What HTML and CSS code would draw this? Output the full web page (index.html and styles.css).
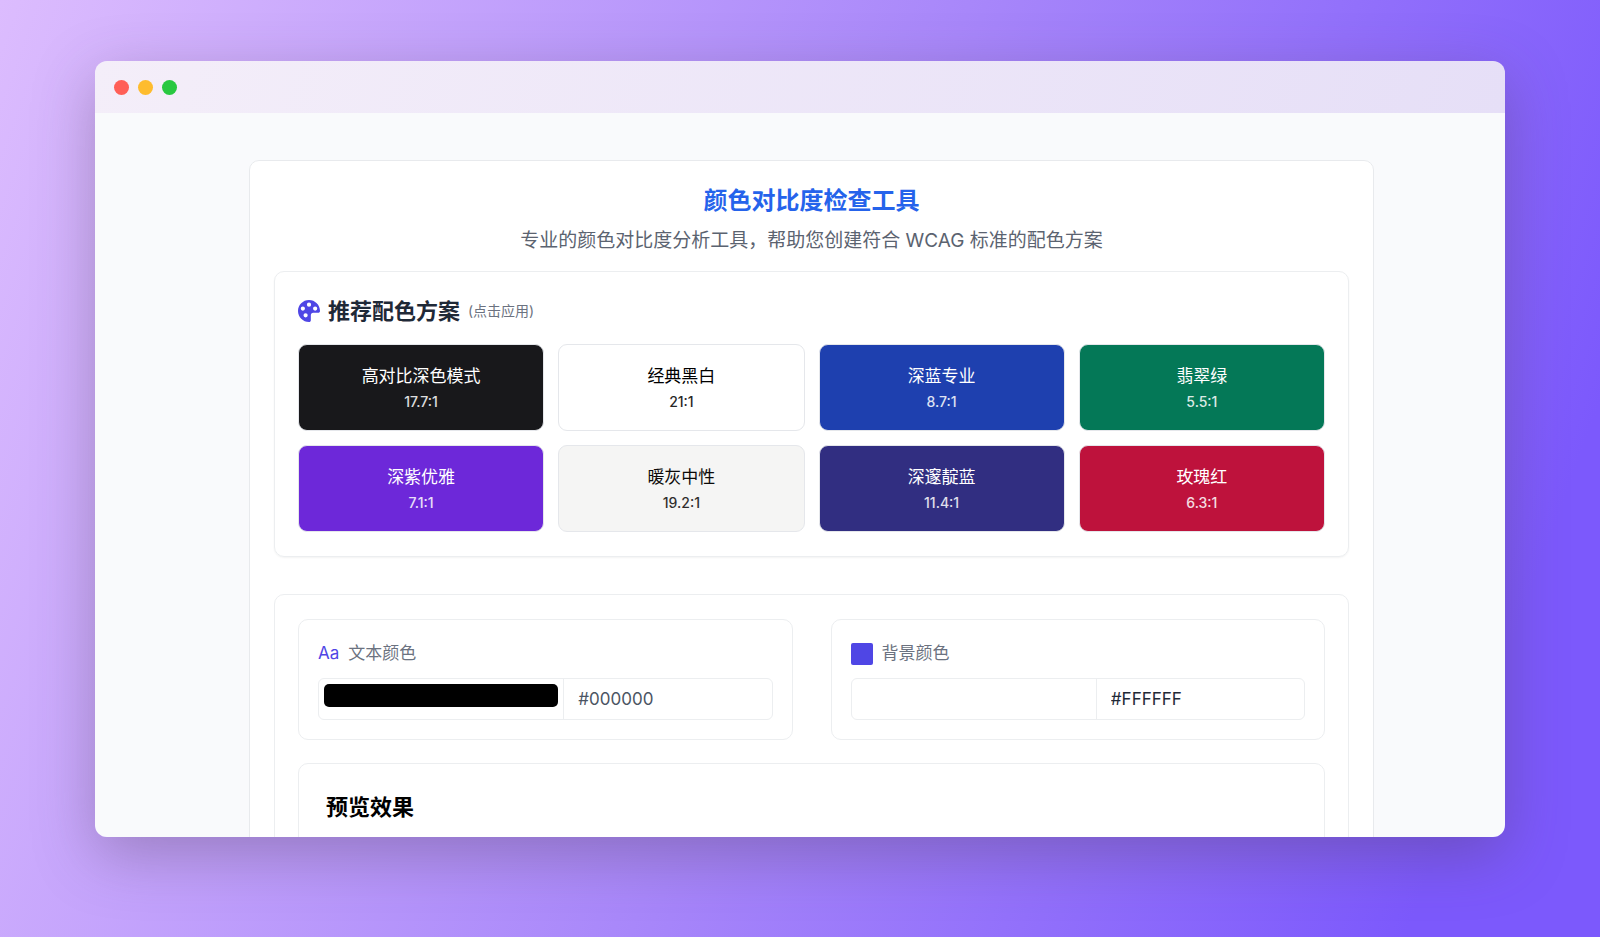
FILE: index.html
```html
<!DOCTYPE html>
<html lang="zh-CN">
<head>
    <meta charset="UTF-8">
    <meta name="viewport" content="width=device-width, initial-scale=1.0">
    <title>颜色对比度检查工具</title>
    <link rel="stylesheet" href="styles.css">
</head>
<body>
    <div class="window">
        <div class="titlebar">
            <span class="dot dot-red"></span>
            <span class="dot dot-yellow"></span>
            <span class="dot dot-green"></span>
        </div>

        <div class="viewport">
            <main class="container">
                <header class="header">
                    <h1>颜色对比度检查工具</h1>
                    <p>专业的颜色对比度分析工具，帮助您创建符合 WCAG 标准的配色方案</p>
                </header>

                <section class="panel schemes">
                    <h2>
                        <svg class="icon" viewBox="0 0 24 24" aria-hidden="true">
                            <path fill-rule="evenodd" d="M12 0C5.400 0 0 5.400 0 12s5.400 12 12 12c1.200 0 2-.8 2-2v-5.500c0-1.400 1-2.500 2.500-2.500H22c1.200 0 2-.8 2-2C24 5.400 18.600 0 12 0zM5.300 7.100a2.300 2.300 0 1 1 0 4.600 2.300 2.300 0 0 1 0-4.600zM12 2.800a2.300 2.300 0 1 1 0 4.600 2.300 2.300 0 0 1 0-4.600zM18.700 7.100a2.300 2.300 0 1 1 0 4.600 2.300 2.300 0 0 1 0-4.600zM8.300 14.400a2.300 2.300 0 1 1 0 4.600 2.300 2.300 0 0 1 0-4.600z"/>
                        </svg>
                        推荐配色方案
                        <small>(点击应用)</small>
                    </h2>
                    <div class="scheme-grid">
                        <button type="button" class="scheme dark">高对比深色模式<span>17.7:1</span></button>
                        <button type="button" class="scheme classic">经典黑白<span>21:1</span></button>
                        <button type="button" class="scheme blue">深蓝专业<span>8.7:1</span></button>
                        <button type="button" class="scheme green">翡翠绿<span>5.5:1</span></button>
                        <button type="button" class="scheme purple">深紫优雅<span>7.1:1</span></button>
                        <button type="button" class="scheme warm">暖灰中性<span>19.2:1</span></button>
                        <button type="button" class="scheme indigo">深邃靛蓝<span>11.4:1</span></button>
                        <button type="button" class="scheme rose">玫瑰红<span>6.3:1</span></button>
                    </div>
                </section>

                <section class="panel checker">
                    <div class="color-inputs">
                        <div class="color-card">
                            <label for="text-hex"><span class="label-aa">Aa</span>文本颜色</label>
                            <div class="input-group">
                                <input type="color" id="text-color" value="#000000" aria-label="选择文本颜色">
                                <input type="text" class="hex muted" id="text-hex" value="#000000">
                            </div>
                        </div>
                        <div class="color-card">
                            <label for="bg-hex"><span class="label-square"></span>背景颜色</label>
                            <div class="input-group">
                                <input type="color" id="bg-color" value="#ffffff" aria-label="选择背景颜色">
                                <input type="text" class="hex" id="bg-hex" value="#FFFFFF">
                            </div>
                        </div>
                    </div>
                    <div class="preview">
                        <h2>预览效果</h2>
                    </div>
                </section>
            </main>
        </div>
    </div>

    <script>
        // 颜色选择器与十六进制输入框保持同步
        function bindColor(pickerId, hexId) {
            const picker = document.getElementById(pickerId);
            const hex = document.getElementById(hexId);
            picker.addEventListener('input', () => {
                hex.value = picker.value.toUpperCase();
            });
            hex.addEventListener('change', () => {
                if (/^#[0-9a-f]{6}$/i.test(hex.value)) picker.value = hex.value;
            });
        }

        bindColor('text-color', 'text-hex');
        bindColor('bg-color', 'bg-hex');
    </script>
</body>
</html>
```
FILE: styles.css
```css
* {
    box-sizing: border-box;
}
body {
    margin: 0;
    height: 100vh;
    padding: 61px 95px 100px;
    display: flex;
    font-family: Inter, "Noto Sans CJK SC", sans-serif;
    color: #1f2937;
    background: linear-gradient(110deg, #dcbcfe 0%, #a887fa 50%, #7c59fc 90%);
}
h1, h2, p {
    margin: 0;
}

/* 窗口外框 */
.window {
    flex: 1;
    min-width: 0;
    display: flex;
    flex-direction: column;
    border-radius: 12px;
    overflow: hidden;
    box-shadow: 0 18px 60px rgba(80, 60, 90, 0.35);
}
.titlebar {
    display: flex;
    align-items: center;
    gap: 9px;
    height: 52px;
    padding: 0 19px;
    flex-shrink: 0;
    background: linear-gradient(110deg, #f4eef9, #e6dff7);
}
.dot {
    width: 15px;
    height: 15px;
    border-radius: 50%;
}
.dot-red {
    background: #ff5f57;
}
.dot-yellow {
    background: #febc2e;
}
.dot-green {
    background: #28c840;
}
.viewport {
    flex: 1;
    min-height: 0;
    overflow: hidden;
    padding: 47px 0 0 23px;
    background: #f9fafc;
}

.container {
    max-width: 1125px;
    margin: 0 auto;
    padding: 24px;
    background: #fff;
    border: 1px solid #e8eaed;
    border-radius: 10px;
}
.header {
    text-align: center;
}
.header h1 {
    font-size: 24px;
    line-height: 32px;
    font-weight: 700;
    color: #2563eb;
}
.header p {
    margin: 9px 0 15px;
    font-size: 19px;
    line-height: 30px;
    color: #5b6370;
}

.panel {
    padding: 24px 23px;
    border: 1px solid #eceef0;
    border-radius: 10px;
}

/* 推荐配色 */
.schemes {
    margin-bottom: 37px;
    box-shadow: 0 1px 2px rgba(0, 0, 0, 0.05);
}
.schemes h2 {
    display: flex;
    align-items: center;
    gap: 8px;
    margin-bottom: 18px;
    font-size: 22px;
    line-height: 30px;
    font-weight: 700;
}
.schemes small {
    font-size: 14px;
    font-weight: 400;
    color: #6b7280;
}
.icon {
    width: 22px;
    height: 22px;
    fill: #4f46e5;
}
.scheme-grid {
    display: grid;
    grid-template-columns: repeat(4, 1fr);
    gap: 14px;
}
.scheme {
    display: flex;
    flex-direction: column;
    align-items: center;
    gap: 2px;
    padding: 17px 12px;
    border: 1px solid #e5e7eb;
    border-radius: 9px;
    font-family: inherit;
    font-size: 17px;
    line-height: 28px;
    color: #fff;
    cursor: pointer;
}
.scheme span {
    font-size: 14px;
    line-height: 20px;
    font-weight: 500;
    opacity: 0.85;
}
.dark {
    background: #18181b;
}
.classic {
    background: #fff;
    color: #000;
}
.blue {
    background: #1e40af;
}
.green {
    background: #047857;
}
.purple {
    background: #6d28d9;
}
.warm {
    background: #f5f5f4;
    color: #0c0a09;
}
.indigo {
    background: #312e81;
}
.rose {
    background: #be123c;
}
.scheme-grid .scheme {
    min-height: 87px;
}

/* 颜色输入 */
.color-inputs {
    display: grid;
    grid-template-columns: 1fr 1fr;
    gap: 38px;
    margin-bottom: 23px;
}
.color-card {
    padding: 19px;
    border: 1px solid #eceef0;
    border-radius: 10px;
}
.color-card label {
    display: flex;
    align-items: center;
    gap: 9px;
    margin-bottom: 10px;
    font-size: 17px;
    line-height: 29px;
    color: #6b7280;
}
.label-aa {
    color: #4f46e5;
}
.label-square {
    width: 22px;
    height: 22px;
    border-radius: 2px;
    background: #4f46e5;
}
.input-group {
    display: flex;
    height: 42px;
    border: 1px solid #eceef0;
    border-radius: 6px;
    overflow: hidden;
}
.input-group input {
    min-width: 0;
    border: 0;
    background: transparent;
}
.input-group input[type="color"] {
    width: 54%;
    height: 33px;
    padding: 5px;
}
input[type="color"]::-webkit-color-swatch-wrapper {
    padding: 0;
}
input[type="color"]::-webkit-color-swatch {
    border: 0;
    border-radius: 5px;
}
.input-group .hex {
    width: 46%;
    padding: 0 14px;
    border-left: 1px solid #eceef0;
    font-family: inherit;
    font-size: 17px;
    color: #1f2937;
}
.input-group .muted {
    color: #4b5563;
}

.preview {
    min-height: 240px;
    padding: 27px;
    border: 1px solid #eceef0;
    border-radius: 10px;
}
.preview h2 {
    font-size: 22px;
    line-height: 32px;
    color: #000;
}
```
